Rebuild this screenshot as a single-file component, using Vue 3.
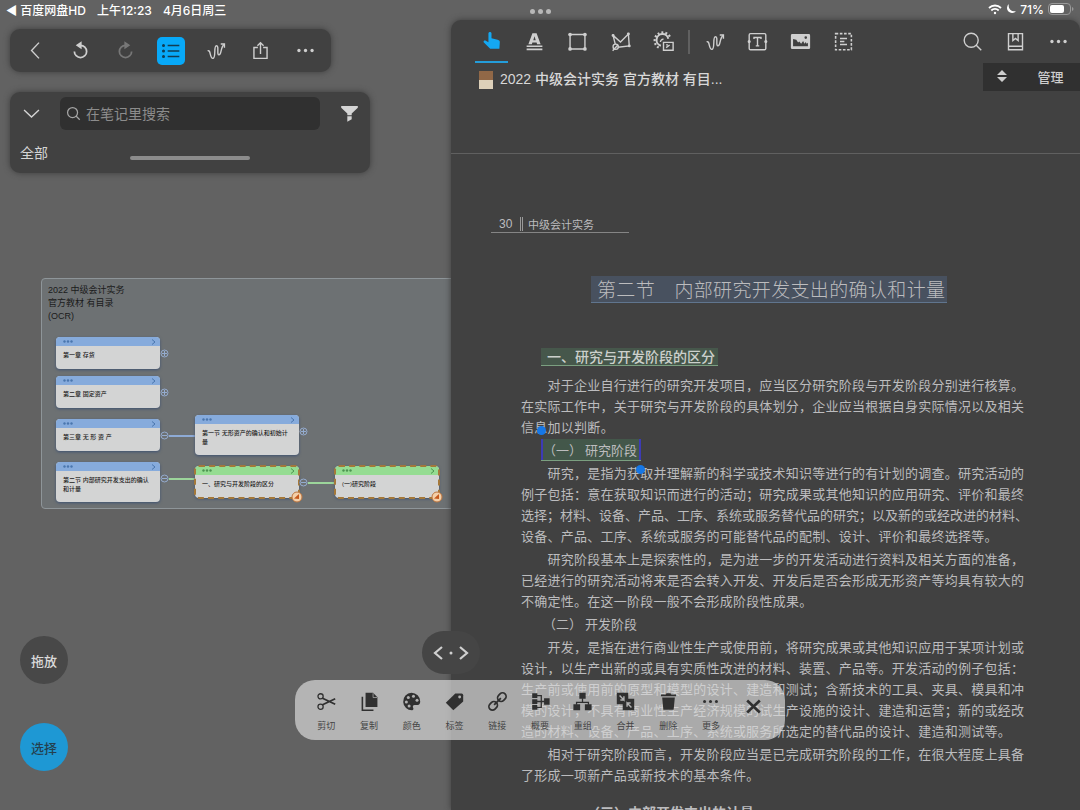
<script setup>
const squiggle = '<path d="M3 12.500c4-2 2 8.500 6 8.500S9.500 6.500 13 6.500 13 17 16 17s1.500-9 6-12"/><path d="M18 4.500h4.200v4.300" />'
const icons = {
  back: '<path d="M16 3 7.500 12l8.500 9"/>',
  undo: '<path stroke-width="2" d="M5 13a7 7 0 1 0 7-7"/><path fill="currentColor" d="M12.500 3v6L8 6z"/>',
  redo: '<path stroke-width="2" d="M19 13a7 7 0 1 1-7-7"/><path fill="currentColor" d="M11.500 3v6L16 6z"/>',
  list: '<path stroke-width="1.800" d="M8 5.500h14M8 12h14M8 18.500h14"/><g fill="currentColor"><circle cx="3" cy="5.500" r="1"/><circle cx="3" cy="12" r="1"/><circle cx="3" cy="18.500" r="1"/></g>',
  squiggle,
  share: '<path d="M9 8.500H4.500v12.500h15v-12.500H15M12 16V3M8.500 6.500 12 3l3.500 3.500"/>',
  dots: '<g fill="currentColor" stroke="none"><circle cx="4.500" cy="12" r="1.900"/><circle cx="12" cy="12" r="1.900"/><circle cx="19.500" cy="12" r="1.900"/></g>',
  down: '<path d="m3.500 8 8.500 8 8.500-8"/>',
  search: '<circle cx="10.500" cy="10.500" r="8"/><path d="m16 16 6 6"/>',
  filter: '<path fill="currentColor" stroke="none" d="M2.500 3.500h19V5.500l-7 6.500V14h-5v-2L2.500 5.500zM9.500 15.200h5V18.500l-5 3z"/>',
  hand: '<path fill="currentColor" stroke="none" d="M8.500 4c0-2.300 3.500-2.300 3.500 0V9.500l7 1.500c2 .5 2.700 1.500 2.500 3L21 21.500H10.500L3 14c-.5-2 1.200-2.500 3-1.500l2.500 1.500z"/>',
  mark: '<path stroke="none" fill="currentColor" fill-rule="evenodd" d="M9.600 2.500h4.800l4.600 12.500h-4l-.6-2H9.600L9 15H5zm2.400 3.500-1.400 4.700h2.800z"/><path stroke-width="1.800" d="M3 17.500h18M3 21h18"/>',
  rect: '<path d="M3.500 4h17v16.500h-17z"/><g fill="currentColor" stroke="none"><circle cx="3.500" cy="4" r="2.100"/><circle cx="20.500" cy="4" r="2.100"/><circle cx="3.500" cy="20.500" r="2.100"/><circle cx="20.500" cy="20.500" r="2.100"/></g>',
  poly: '<path d="M3.500 5 6 15M3.500 5l8.500 7.500 9-9 1 13.500-13 1.500M3 22.500 9 16"/><circle cx="6.500" cy="18" r="3"/><g fill="currentColor"><circle cx="3.500" cy="5" r=".9"/><circle cx="21" cy="3.500" r=".9"/><circle cx="22" cy="17" r=".9"/></g>',
  gear: '<path stroke-width="2.200" d="M9 16.800a6.800 6.800 0 1 1 8.500-8"/><path stroke-width="2.500" stroke-dasharray="2.200 2.300" d="M6.500 19A9.300 9.300 0 1 1 20 8"/><path d="M8.500 12.500a3 3 0 0 1 3.500-3M12 13h11v9H12zM15 19l4-3M15 15.800h2"/>',
  textbox: '<rect x="2.500" y="3" width="19" height="18.500" rx="1.500"/><path d="M8 9V7.500h8V9M12 7.500V17M10 17h4"/><g fill="currentColor"><circle cx="2.500" cy="12" r="1"/><circle cx="21.500" cy="12" r="1"/></g>',
  image: '<path stroke="none" fill="currentColor" fill-rule="evenodd" d="M2.500 3.500h19Q23 3.500 23 5v14q0 1.500-1.500 1.500h-19Q1 20.500 1 19V5q0-1.500 1.500-1.500m1 14h17v-4l-1.500 1-1-2-1.500 2-1.500-3-2.300 3-2-2.500-1.500 1-2-3L3.500 9zM18 6a1.500 1.500 0 1 0 0 3 1.500 1.500 0 0 0 0-3"/>',
  select: '<path stroke-dasharray="3 1.800" stroke-width="1.800" d="M3 3h18v18.500H3z"/><path d="M8 8.500h8M8 12h5M8 15.500h8"/>',
  book: '<path d="M4 3h16v18.500H4zM4 17.500h16M9 3v8l3-2.500 3 2.500V3"/>',
  cut: '<circle cx="4.500" cy="5.500" r="3.300"/><circle cx="4.500" cy="18.500" r="3.300"/><path stroke-width="2.200" d="m7 8 16 7.500M7 16 23 8.500"/>',
  copy: '<path fill="currentColor" stroke="none" d="M7 1h9.500L22 6.500V19H7z"/><path stroke="#aaa" stroke-width="1" d="M16.500 1.500V7H22"/><path stroke-width="2" d="M3 6v17h14"/>',
  color: '<path fill="currentColor" stroke="none" d="M12 1a11 11 0 1 0 1 22c1.900-.4 1.600-2.200.9-3.300-.6-1.700.2-3.300 1.900-3.300H19.500c2.500 0 3.500-2 3.500-4.400A11 11 0 0 0 12 1"/><g fill="#b2b2b2" stroke="none"><circle cx="5.500" cy="12.500" r="1.900"/><circle cx="8" cy="6.800" r="1.900"/><circle cx="14.500" cy="5.500" r="1.900"/><circle cx="19" cy="10.500" r="1.900"/><circle cx="9" cy="17.800" r="1.900"/></g>',
  tag: '<path fill="currentColor" stroke="none" d="M13 2h8q2 0 2 2v8L10.500 23 1 13.500z"/><circle cx="18.500" cy="6.300" r="1.800" fill="#b2b2b2" stroke="none"/>',
  link: '<g transform="rotate(-45 12 12)" stroke-width="2.200"><rect x="-1.500" y="7.500" width="11.500" height="9" rx="4.500"/><rect x="14" y="7.500" width="11.500" height="9" rx="4.500"/><path d="M6 12h12"/></g>',
  outline: '<path d="M6 4.500h7v15H6M6 12h13"/><g fill="currentColor" stroke="none"><path d="M1.500 1.500h6.500v6H1.500zM1.500 9h6.500v6H1.500zM1.500 16.500h6.500v6H1.500zM16.500 8H23.500v8h-7z"/></g>',
  regroup: '<path d="M12 8v5M4.500 16v-3h15v3"/><g fill="currentColor" stroke="none"><path d="M8 1h8v7.500H8zM.5 15.500h8.500V23H.5zM15 15.500h8.500V23H15z"/></g>',
  merge: '<path fill="currentColor" stroke="none" d="M1 1h14.500v7.500H23V23H8.500v-7.500H1z"/><path stroke="#b2b2b2" stroke-width="1.800" d="m4.500 4.500 5.500 5.500V5.500M10 10H5.500M19.500 19.500 14 14v4.500M14 14h4.500"/>',
  trash: '<path fill="currentColor" stroke="none" d="M2.500 3h6l1-1.500h5l1 1.500h6v2.500h-19zM4 7h16l-1.500 15.500h-13z"/>',
  close: '<path stroke-width="3.400" d="m4 4.500 16 15M20 4.500l-16 15"/>',
}
const mapTools = [
  ['back', '返回'], ['undo', '撤销'], ['redo', '重做'], ['list', '大纲'],
  ['squiggle', '套索'], ['share', '分享'], ['dots', '更多'],
]
const docTools = [
  ['hand', '手势'], ['mark', '高亮'], ['rect', '矩形'], ['poly', '多边形'], ['gear', '设置'],
]
const drawTools = [
  ['squiggle', '手写'], ['textbox', '文本框'], ['image', '图片'], ['select', '选择文本'],
]
const viewTools = [['search', '搜索'], ['book', '书签'], ['dots', '更多']]
const actions = [
  ['cut', '剪切'], ['copy', '复制'], ['color', '颜色'], ['tag', '标签'], ['link', '链接'],
  ['outline', '概要'], ['regroup', '重组'], ['merge', '合并'], ['trash', '删除'], ['dots', '更多'],
]

// Card positions on the mind map, relative to its frame.
const nodes = [
  { x: 14, y: 58, h: 32, text: '第一章 存货', knob: '+' },
  { x: 14, y: 97, h: 32, text: '第二章 固定资产', knob: '+' },
  { x: 14, y: 140, h: 32, text: '第三章 无 形 资 产', knob: '-', link: 'blue' },
  { x: 14, y: 183, h: 40, text: '第二节 内部研究开发支出的确认和计量', knob: '-', link: 'green' },
  { x: 153, y: 136, h: 40, text: '第一节 无形资产的确认和初始计量', knob: '+' },
  { x: 153, y: 187, h: 32, text: '一、研究与开发阶段的区分', knob: '-', link: 'green', picked: true },
  { x: 293, y: 187, h: 32, text: '(一)研究阶段', picked: true },
]

// The book is set on a grid of 38 characters per line.
const CELLS = 38
const blocks = [
  { lines: [
    '对于企业自行进行的研究开发项目，应当区分研究阶段与开发阶段分别进行核算。',
    '在实际工作中，关于研究与开发阶段的具体划分，企业应当根据自身实际情况以及相关',
    '信息加以判断。',
  ] },
  { head: '（一） 研究阶段', selected: true },
  { lines: [
    '研究，是指为获取并理解新的科学或技术知识等进行的有计划的调查。研究活动的',
    '例子包括：意在获取知识而进行的活动；研究成果或其他知识的应用研究、评价和最终',
    '选择；材料、设备、产品、工序、系统或服务替代品的研究；以及新的或经改进的材料、',
    '设备、产品、工序、系统或服务的可能替代品的配制、设计、评价和最终选择等。',
  ] },
  { lines: [
    '研究阶段基本上是探索性的，是为进一步的开发活动进行资料及相关方面的准备，',
    '已经进行的研究活动将来是否会转入开发、开发后是否会形成无形资产等均具有较大的',
    '不确定性。在这一阶段一般不会形成阶段性成果。',
  ] },
  { head: '（二） 开发阶段' },
  { lines: [
    '开发，是指在进行商业性生产或使用前，将研究成果或其他知识应用于某项计划或',
    '设计，以生产出新的或具有实质性改进的材料、装置、产品等。开发活动的例子包括：',
    '生产前或使用前的原型和模型的设计、建造和测试；含新技术的工具、夹具、模具和冲',
    '模的设计；不具有商业性生产经济规模的试生产设施的设计、建造和运营；新的或经改',
    '造的材料、设备、产品、工序、系统或服务所选定的替代品的设计、建造和测试等。',
  ] },
  { lines: [
    '相对于研究阶段而言，开发阶段应当是已完成研究阶段的工作，在很大程度上具备',
    '了形成一项新产品或新技术的基本条件。',
  ] },
]
const lineStyle = (text, i) => ({
  width: (Math.min(text.length, CELLS) / CELLS) * 100 + '%',
  marginLeft: i === 0 ? (2 / CELLS) * 100 + '%' : '0',
})
</script>

<template>
  <div class="app">
    <header class="status">
      <a href="#" class="source">◀ 百度网盘HD</a>
      <span class="time">上午12:23</span>
      <span>4月6日周三</span>
      <span class="system">
        <svg width="14" height="11" viewBox="0 0 14 11" fill="none" stroke="#fff" stroke-width="1.800"><path d="M1 4a8.500 8.500 0 0 1 12 0M3.300 6.500a5.200 5.200 0 0 1 7.400 0" /><circle cx="7" cy="9" r="1.200" fill="#fff" stroke="none" /></svg>
        <svg width="10" height="10" viewBox="0 0 10 10" fill="#fff"><path d="M3 0a5 5 0 1 0 7 7A5.500 5.500 0 0 1 3 0" /></svg>
        <span>71%</span>
        <svg width="26" height="12" viewBox="0 0 26 12"><rect x=".5" y=".5" width="22" height="11" rx="3.500" fill="none" stroke="#999" /><rect x="2" y="2" width="14" height="8" rx="2" fill="#fff" /><path d="M24 4v4q1.500-.5 1.500-2T24 4" fill="#999" /></svg>
      </span>
    </header>

    <main class="panes">
      <section class="map">
        <div class="canvas">
          <div class="frame">
            <h2 class="frame-title">2022 中级会计实务<br>官方教材 有目录<br>(OCR)</h2>
            <article
              v-for="n in nodes"
              :key="n.text"
              class="node"
              :class="{ picked: n.picked }"
              :style="{ left: n.x + 'px', top: n.y + 'px', height: n.h + 'px' }"
            >
              <div class="node-bar">
                <svg width="10" height="3" viewBox="0 0 10 3" fill="currentColor"><circle cx="1.500" cy="1.500" r="1.200" /><circle cx="5" cy="1.500" r="1.200" /><circle cx="8.500" cy="1.500" r="1.200" /></svg>
                <svg width="5" height="6" viewBox="0 0 5 6" fill="none" stroke="currentColor"><path d="m1 .5 3 2.500-3 2.500" /></svg>
              </div>
              <p>{{ n.text }}</p>
              <i v-if="n.link" class="wire" :class="n.link"></i>
              <svg v-if="n.knob" class="knob" width="9" height="9" viewBox="0 0 9 9" fill="none" stroke="currentColor"><circle cx="4.500" cy="4.500" r="3.500" /><path :d="n.knob === '+' ? 'M2 4.500h5M4.500 2v5' : 'M2 4.500h5'" /></svg>
              <svg v-if="n.picked" class="badge" width="12" height="12" viewBox="0 0 12 12"><circle cx="6" cy="6" r="5" fill="#f3cfa8" stroke="#bd7640" /><path d="M3 7.500 8 3v5z" fill="#c6591d" /></svg>
            </article>
          </div>
        </div>

        <nav class="toolbar" aria-label="脑图工具">
          <button v-for="[icon, label] in mapTools" :key="icon" class="tool" :class="'is-' + icon" :aria-label="label">
            <svg viewBox="0 0 24 24" v-html="icons[icon]"></svg>
          </button>
        </nav>

        <div class="finder">
          <div class="finder-row">
            <button class="plain" aria-label="收起"><svg viewBox="0 0 24 24" v-html="icons.down"></svg></button>
            <label class="search">
              <svg viewBox="0 0 24 24" v-html="icons.search"></svg>
              <input type="search" placeholder="在笔记里搜索" aria-label="在笔记里搜索">
            </label>
            <button class="plain" aria-label="筛选"><svg viewBox="0 0 24 24" v-html="icons.filter"></svg></button>
          </div>
          <div class="scope"><button class="all">全部</button><i class="grip"></i></div>
        </div>

        <div class="modes">
          <button class="mode">拖放</button>
          <button class="mode active">选择</button>
        </div>
      </section>

      <section class="doc">
        <i class="handle"><b></b><b></b><b></b></i>
        <nav class="doc-tools" aria-label="文档工具">
          <button v-for="[icon, label] in docTools" :key="icon" class="tool" :class="'is-' + icon" :aria-label="label"><svg viewBox="0 0 24 24" v-html="icons[icon]"></svg></button>
          <i class="rule"></i>
          <button v-for="[icon, label] in drawTools" :key="icon" class="tool" :aria-label="label"><svg viewBox="0 0 24 24" v-html="icons[icon]"></svg></button>
          <i class="space"></i>
          <button v-for="[icon, label] in viewTools" :key="icon" class="tool" :aria-label="label"><svg viewBox="0 0 24 24" v-html="icons[icon]"></svg></button>
        </nav>
        <div class="tabs">
          <div class="tab"><i class="cover"></i><h1>2022 中级会计实务 官方教材 有目...</h1></div>
          <div class="manage">
            <button aria-label="排序"><svg width="10" height="12" viewBox="0 0 10 12" fill="currentColor"><path d="M5 0l5 5H0zM0 7h10l-5 5z" /></svg></button>
            <button>管理</button>
          </div>
        </div>

        <div class="page">
          <div class="running"><span class="folio">30</span><span class="book-name">中级会计实务</span></div>
          <h2 class="title">第二节　内部研究开发支出的确认和计量</h2>
          <h3 class="section">一、研究与开发阶段的区分</h3>
          <div class="body">
            <template v-for="(b, k) in blocks" :key="k">
              <h4 v-if="b.head" :class="{ selected: b.selected }">{{ b.head }}</h4>
              <p v-else><span v-for="(t, i) in b.lines" :key="t" class="line" :style="lineStyle(t, i)">{{ t }}</span></p>
            </template>
          </div>
          <h3 class="next">（三）内部开发支出的计量</h3>
        </div>
      </section>

      <button class="splitter" aria-label="调整分栏">
        <svg width="36" height="16" viewBox="0 0 36 16" fill="none" stroke="currentColor" stroke-width="2.200"><path d="m9 2-7 6 7 6M27 2l7 6-7 6" /><circle cx="18" cy="8" r="1.500" fill="currentColor" stroke="none" /></svg>
      </button>
    </main>

    <div class="actions" role="toolbar" aria-label="卡片操作">
      <button v-for="[icon, label] in actions" :key="icon"><svg viewBox="0 0 24 24" v-html="icons[icon]"></svg><span>{{ label }}</span></button>
      <button class="dismiss" aria-label="关闭"><svg viewBox="0 0 24 24" v-html="icons.close"></svg></button>
    </div>
  </div>
</template>

<style>
body { margin: 0; background: #626262; }
</style>

<style scoped>
* { box-sizing: border-box; }
.app {
  position: relative;
  display: flex;
  flex-direction: column;
  height: 100vh;
  overflow: hidden;
  background: #626262;
  color: #d4d4d4;
  font-family: "Liberation Sans", "Noto Sans CJK SC", sans-serif;
}
button { border: 0; padding: 0; background: none; color: inherit; font: inherit; }
h1, h2, h3, h4, p { margin: 0; font-weight: 400; }
svg { flex: none; }
.tool svg, .plain svg, .search svg, .actions svg {
  width: 21px; height: 21px; fill: none; stroke: currentColor; stroke-width: 1.6;
}

.status {
  display: flex;
  align-items: center;
  height: 20px;
  padding: 0 6px 2px;
  gap: 11px;
  color: #fff;
  font: 500 12px "Inter", "Noto Sans CJK SC", sans-serif;
}
.source { color: inherit; text-decoration: none; }
.system { display: flex; align-items: center; gap: 4px; margin-left: auto; }

.panes {
  position: relative; flex: 1; min-height: 0;
  display: grid; grid-template-columns: 451fr 629fr; grid-template-rows: minmax(0, 1fr);
}
.map { position: relative; display: flex; flex-direction: column; align-items: flex-start; overflow: hidden; padding: 9px 10px 39px; min-width: 0; }
.canvas { position: absolute; inset: 0; }
.toolbar {
  position: relative;
  display: flex;
  align-items: center;
  height: 43px;
  padding: 0 3px;
  border-radius: 10px;
  background: #414141;
  box-shadow: 0 0 6px #3c3c3c;
}
.tool { display: flex; align-items: center; justify-content: center; width: 45px; height: 43px; color: #cfcfcf; }
.is-redo { color: #777; }
.toolbar .is-list { color: #123c52; }
.toolbar .is-list svg { width: 28px; height: 28px; padding: 4px; border-radius: 5px; background: #08a9f8; }
.finder {
  position: relative;
  width: 360px;
  max-width: 100%;
  margin-top: 20px;
  padding: 5px 10px 9px;
  border-radius: 10px;
  background: #414141;
  box-shadow: 0 0 6px #3c3c3c;
}
.finder-row { display: flex; align-items: center; }
.plain { display: flex; justify-content: center; width: 22px; }
.search { flex: 1; display: flex; align-items: center; gap: 5px; height: 33px; margin: 0 18px; padding: 0 6px; border-radius: 6px; background: #303030; color: #a5a5a5; }
.search svg { width: 15px; height: 15px; stroke-width: 2; }
.search input { flex: 1; min-width: 0; height: 33px; border: 0; padding: 0 0 2px; outline: 0; background: none; color: #ddd; font: 14px "Noto Sans CJK SC", sans-serif; }
.search input::placeholder { color: #8c8c8c; }
.scope { display: grid; grid-template-columns: 1fr 120px 1fr; align-items: center; margin-top: 12px; height: 22px; }
.all { justify-self: start; font-size: 14px; line-height: 22px; }
.grip { height: 4px; margin-top: 10px; border-radius: 2px; background: #8c8c8c; }
.modes { position: relative; display: flex; flex-direction: column; gap: 39px; margin: auto 0 0 10px; }
.mode { width: 48px; height: 48px; border-radius: 50%; background: #484848; color: #dadada; font-size: 13px; font-weight: 500; }
.mode.active { background: #1e98d4; color: #24404f; }

.frame {
  position: absolute; left: 41px; top: 258px; right: -8px; height: 231px;
  border: 1px solid #8e9599; border-radius: 4px;
  background: #6d7173;
  color: #1b1b1b;
}
.frame-title { padding: 5px 6px; font-size: 9px; line-height: 13px; }
.node {
  position: absolute; width: 104px;
  border-radius: 4px;
  background: #d3d4d4;
  box-shadow: 0 1px 3px #3f5272;
}
.node-bar { display: flex; justify-content: space-between; align-items: center; height: 9px; padding: 0 4px 0 7px; border-radius: 4px 4px 0 0; background: #86abdc; color: #4a76ae; }
.node p { padding: 5px 7px; font: 500 6px/9px "Liberation Sans", "Noto Sans CJK SC", sans-serif; }
.picked { outline: 2px dashed #a4783a; outline-offset: -1px; }
.picked .node-bar { background: #95dc92; color: #4d9451; }
.knob { position: absolute; right: -9px; top: 12px; color: #94acd0; border-radius: 50%; background: #6d7173; }
.wire { position: absolute; left: 108px; top: 16px; width: 31px; height: 2px; background: #8eabd6; }
.wire.green { background: #9cd59b; }
.badge { position: absolute; right: -4px; bottom: -5px; }

.doc {
  position: relative;
  display: flex;
  flex-direction: column;
  min-width: 0;
  border-radius: 10px 10px 0 0;
  background: #414141;
  box-shadow: 0 0 6px #3c3c3c;
}
.handle { position: absolute; left: 79px; top: -11px; display: flex; gap: 3px; }
.handle b { width: 5px; height: 5px; border-radius: 50%; background: #b8b8b8; }
.doc-tools { display: flex; align-items: center; height: 43px; padding-left: 19px; }
.doc-tools .tool { width: 43px; }
.doc-tools .is-hand { color: #14a8f2; border-bottom: 2px solid #249dda; width: 33px; margin: 0 5px; }
.rule { width: 2px; height: 24px; margin: 0 3px; background: #606060; }
.space { flex: 1; }
.tabs { display: flex; justify-content: space-between; align-items: flex-start; height: 91px; border-bottom: 1px solid #606060; }
.tab { display: flex; align-items: center; gap: 7px; height: 33px; padding-left: 28px; }
.cover { width: 14px; height: 18px; background: linear-gradient(#916847 50%, #ddd0b9 50%); }
.tab h1 { font-size: 14px; font-weight: 500; line-height: 18px; color: #d8d8d8; white-space: nowrap; padding-bottom: 2px; }
.manage { display: flex; align-items: center; height: 28px; background: #303030; font-size: 13px; font-weight: 500; }
.manage button { width: 59px; height: 28px; padding-bottom: 2px; color: #cecece; }
.manage button:first-child { display: flex; align-items: center; justify-content: center; width: 38px; }

.page { flex: 1; min-height: 0; overflow: hidden; padding: 62px 56px 0 70px; color: #bcbcbe; font-family: "Noto Sans CJK SC", sans-serif; }
.running { display: flex; align-items: center; width: 138px; height: 17px; margin-left: -30px; padding-left: 8px; border-bottom: 1px solid #858585; }
.folio { width: 21px; font: 12px "Liberation Sans", sans-serif; }
.book-name { padding-left: 5px; border-left: 3px double #999; font-size: 11px; line-height: 14px; }
.title { width: 356px; margin: 43px 0 0 70px; padding: 0 2px 0 6px; border-bottom: 1px solid #60758e; background: #48515f; font-size: 19px; font-weight: 300; line-height: 26px; white-space: nowrap; text-align: justify; text-align-last: justify; }
.section { width: fit-content; margin: 45px 0 0 20px; padding: 0 3px 0 6px; border-bottom: 1px solid #7b9f80; background: #46574b; color: #ccd0cc; font-size: 14px; font-weight: 500; line-height: 17px; white-space: nowrap; }
.body { display: flex; flex-direction: column; gap: 2px; margin-top: 8px; font-size: 13px; line-height: 21px; }
.line { display: block; text-align: justify; text-align-last: justify; white-space: nowrap; }
.body h4 { position: relative; width: fit-content; margin-left: 22px; font-size: 13px; line-height: 21px; white-space: nowrap; }
.body .selected { margin-left: 20px; padding-right: 2px; border-left: 2px solid #3d3bb5; border-right: 2px solid #3d3bb5; background: #43574a; box-shadow: 0 1px #7b9f80; }
.selected::before, .selected::after { content: ""; position: absolute; width: 9px; height: 9px; border-radius: 50%; background: #1677e6; }
.selected::before { left: -6px; top: -13px; }
.selected::after { right: -6px; bottom: -14px; }
.next { margin: 17px 0 0 65px; font-size: 14px; font-weight: 700; line-height: 20px; }

.splitter {
  position: absolute; left: 41.76%; top: 611px;
  transform: translateX(-50%);
  display: flex; align-items: center; justify-content: center;
  width: 58px; height: 43px; border-radius: 22px;
  background: #454545; color: #d0d0d0;
}
.actions {
  position: absolute; left: 50%; bottom: 70px;
  transform: translateX(-50%);
  display: flex; align-items: center;
  width: 490px; height: 60px; padding: 0 10px;
  border-radius: 20px;
  background: rgba(215, 215, 215, .7);
  color: #303030;
}
.actions button { flex: 1; display: flex; flex-direction: column; align-items: center; justify-content: center; gap: 9px; height: 60px; padding-top: 4px; }
.actions .dismiss { padding: 0 0 8px; }
.actions svg { width: 19px; height: 19px; }
.actions span { font-size: 9px; line-height: 12px; color: #444; }
</style>
